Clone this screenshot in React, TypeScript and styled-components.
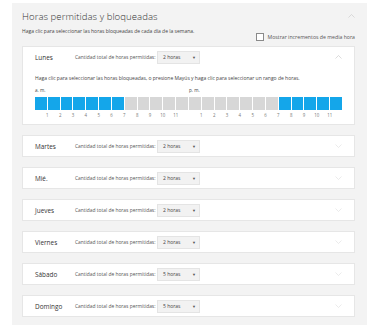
import styled, { createGlobalStyle } from 'styled-components';

const GlobalStyle = createGlobalStyle`
  body {
    margin: 0;
    background: #ffffff;
    font-family: "Open Sans", "Noto Sans", sans-serif;
    color: #333333;
  }
`;

const Panel = styled.section`
  margin: 3px 8px 4px 12px;
  width: 355px;
  box-sizing: border-box;
  background: #f3f3f3;
  padding: 5px 12px 8px 10px;
`;

const PanelHeader = styled.div`
  display: flex;
  justify-content: space-between;
  align-items: center;
  height: 16px;
`;

const Title = styled.h1`
  margin: 0;
  font-size: 9.6px;
  font-weight: 300;
  color: #333333;
  letter-spacing: 0.05px;
`;

const Intro = styled.div`
  display: flex;
  justify-content: space-between;
  align-items: flex-start;
  margin-top: 4px;
  height: 18px;
`;

const SmallText = styled.p`
  margin: 0;
  font-size: 5px;
  line-height: 7px;
  color: #444444;
  white-space: nowrap;
`;

const CheckLabel = styled.label`
  display: flex;
  align-items: center;
  gap: 4px;
  margin-top: 5px;
  font-size: 5.2px;
  color: #555555;
`;

const CheckBox = styled.span`
  width: 6px;
  height: 6px;
  border: 1px solid #8a8a8a;
  background: #ffffff;
`;

const DayList = styled.div`
  display: flex;
  flex-direction: column;
  gap: 10px;
`;

const Card = styled.div`
  background: #ffffff;
  border: 1px solid #e6e6e6;
`;

const CardHeader = styled.div`
  display: flex;
  align-items: center;
  height: 20px;
  padding: 0 12px;
`;

const DayName = styled.span`
  width: 40px;
  flex-shrink: 0;
  font-size: 6.4px;
  color: #333333;
`;

const Label = styled.span`
  width: 82px;
  flex-shrink: 0;
  white-space: nowrap;
  font-size: 4.9px;
  color: #555555;
`;

const Select = styled.div`
  display: flex;
  justify-content: space-between;
  align-items: center;
  width: 43px;
  height: 13px;
  box-sizing: border-box;
  padding: 0 3px 0 5px;
  background: #f2f2f2;
  border: 1px solid #e4e4e4;
  font-size: 5px;
  color: #444444;
  white-space: nowrap;
`;

const Arrow = styled.span`
  font-size: 4px;
  color: #555555;
`;

const Chevron = styled.svg`
  margin-left: auto;
  width: 7px;
  height: 4px;
`;

const CardBody = styled.div`
  padding: 8px 12px 6px 12px;
`;

const Schedule = styled.div`
  margin-top: 4px;
  width: 307px;
  display: grid;
  grid-template-columns: repeat(24, 1fr);
  column-gap: 1px;
`;

const Meridiem = styled.span<{ $col: number }>`
  grid-row: 1;
  grid-column: ${({ $col }) => $col} / span 4;
  padding-bottom: 3px;
  font-size: 4.6px;
  line-height: 8px;
  color: #444444;
`;

const Hour = styled.div<{ $blocked: boolean }>`
  grid-row: 2;
  height: 13px;
  background: ${({ $blocked }) => ($blocked ? '#14a6ea' : '#d7d7d7')};
`;

const HourTick = styled.span`
  grid-row: 3;
  justify-self: start;
  transform: translateX(-50%);
  margin-left: -0.5px;
  padding-top: 2px;
  font-size: 4.4px;
  line-height: 6px;
  color: #777777;
`;

const ChevronIcon = ({ up, color }: { up: boolean; color: string }) => (
  <Chevron viewBox="0 0 14 8">
    <polyline
      points={up ? '1,7 7,1 13,7' : '1,1 7,7 13,1'}
      fill="none"
      stroke={color}
      strokeWidth="1.2"
    />
  </Chevron>
);

type Day = { name: string; hours: number; open?: boolean };

const days: Day[] = [
  { name: 'Lunes', hours: 2, open: true },
  { name: 'Martes', hours: 2 },
  { name: 'Mié.', hours: 2 },
  { name: 'Jueves', hours: 2 },
  { name: 'Viernes', hours: 2 },
  { name: 'Sábado', hours: 5 },
  { name: 'Domingo', hours: 5 },
];

const blocked = (h: number) => h < 7 || h >= 19;
const hours = Array.from({ length: 24 }, (_, i) => i);

const DayCard = ({ day }: { day: Day }) => (
  <Card>
    <CardHeader>
      <DayName>{day.name}</DayName>
      <Label>Cantidad total de horas permitidas:</Label>
      <Select>
        {day.hours} horas
        <Arrow>▼</Arrow>
      </Select>
      <ChevronIcon up={!!day.open} color={day.open ? '#c4c4c4' : '#dddddd'} />
    </CardHeader>
    {day.open && (
      <CardBody>
        <SmallText>
          Haga clic para seleccionar las horas bloqueadas, o presione Mayús y haga clic para
          seleccionar un rango de horas.
        </SmallText>
        <Schedule>
          <Meridiem $col={1}>a. m.</Meridiem>
          <Meridiem $col={13}>p. m.</Meridiem>
          {hours.map((h) => (
            <Hour key={h} $blocked={blocked(h)} />
          ))}
          {hours.map((h) => (
            <HourTick key={h}>{h % 12 === 0 ? '' : h % 12}</HourTick>
          ))}
        </Schedule>
      </CardBody>
    )}
  </Card>
);

const App = () => {
  return (
    <>
      <GlobalStyle />
      <Panel>
        <PanelHeader>
          <Title>Horas permitidas y bloqueadas</Title>
          <ChevronIcon up color="#c8c8c8" />
        </PanelHeader>
        <Intro>
          <SmallText>Haga clic para seleccionar las horas bloqueadas de cada día de la semana.</SmallText>
          <CheckLabel>
            <CheckBox />
            Mostrar incrementos de media hora
          </CheckLabel>
        </Intro>
        <DayList>
          {days.map((d) => (
            <DayCard key={d.name} day={d} />
          ))}
        </DayList>
      </Panel>
    </>
  );
};

export default App;
